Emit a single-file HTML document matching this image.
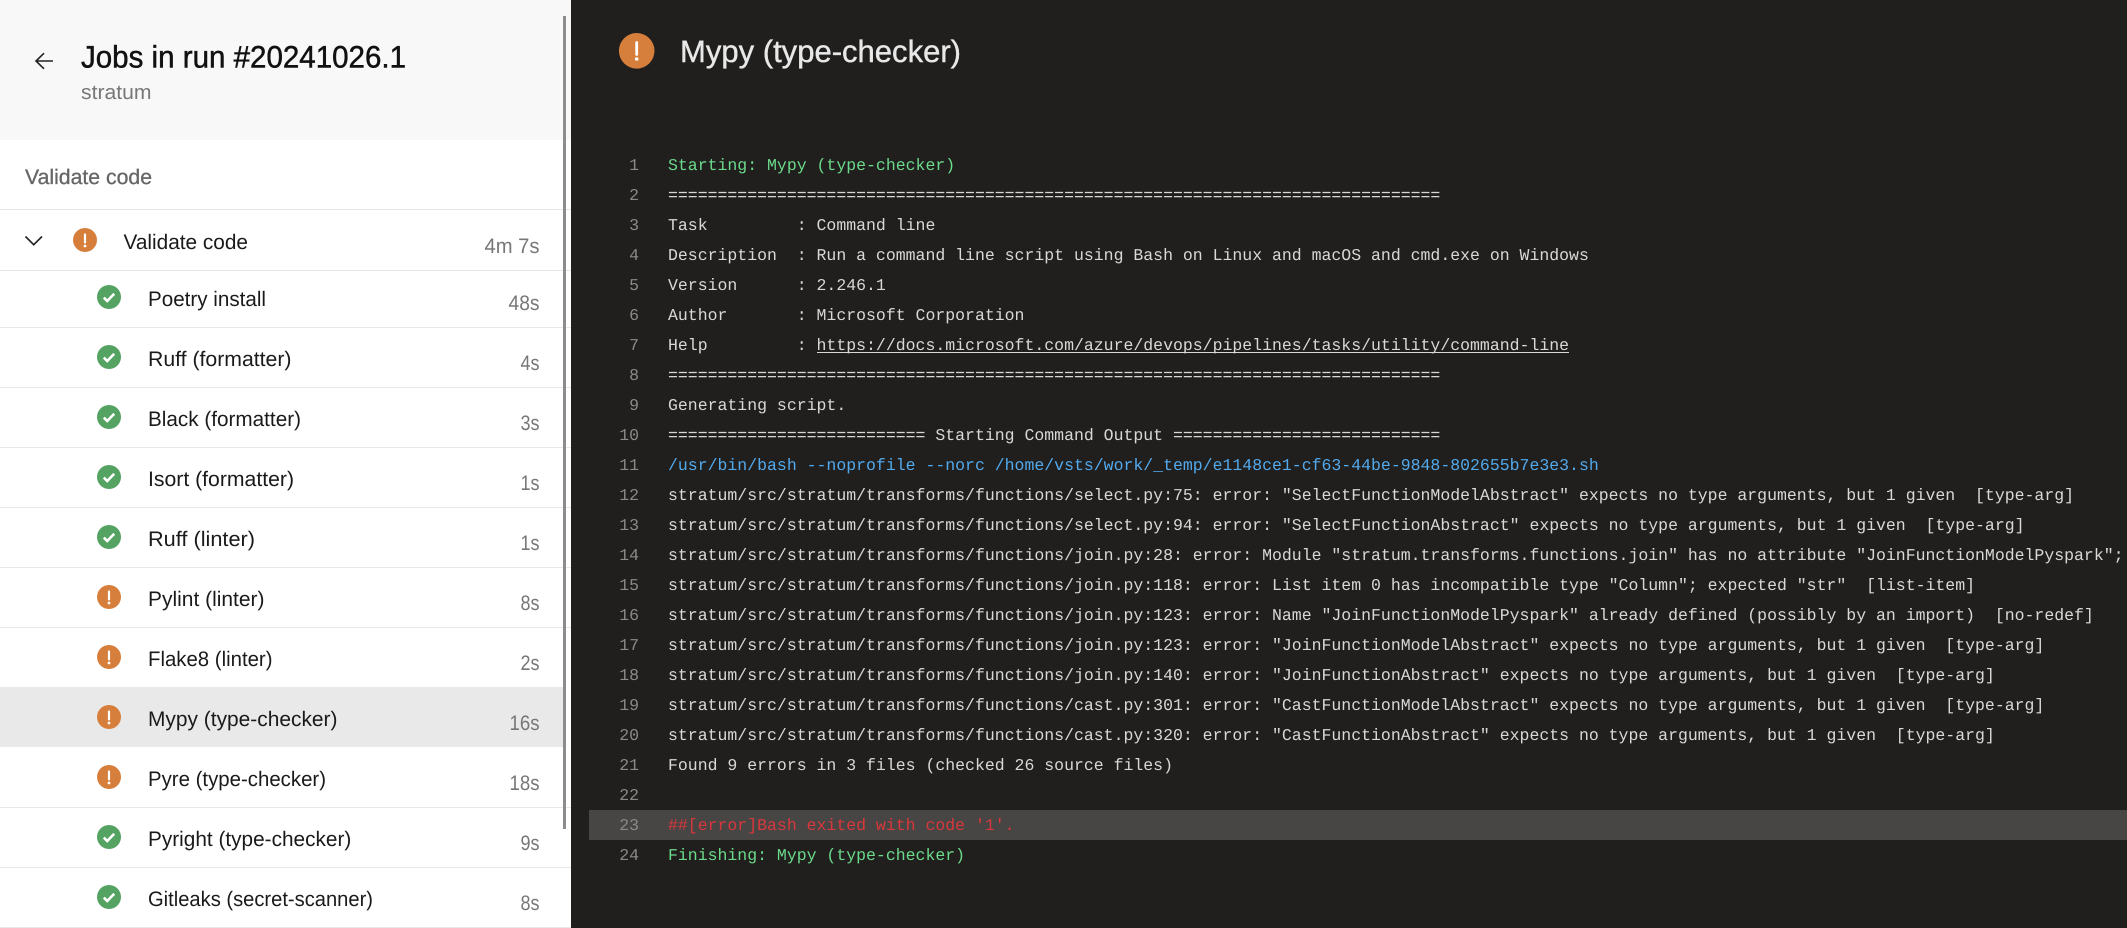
<!DOCTYPE html>
<html lang="en"><head><meta charset="utf-8"><title>Mypy (type-checker)</title>
<style>
html,body{margin:0;padding:0;width:2127px;height:928px;overflow:hidden;background:#201f1e}
svg{display:block}
text{font-family:"Liberation Sans",sans-serif;text-rendering:geometricPrecision;white-space:pre}
.job{font-size:21px;fill:#1a1a1a}
.dur{font-size:21px;fill:#777}
.n{font-family:"Liberation Mono",monospace;font-size:16.5px;fill:#8a8a89;text-anchor:end}
.l{font-family:"Liberation Mono",monospace;font-size:16.5px;fill:#d8d8d7}
.g{fill:#6bd98a}.b{fill:#52a9ec}.r{fill:#d8373c}
</style></head><body>
<svg width="2127" height="928" viewBox="0 0 2127 928" xmlns="http://www.w3.org/2000/svg">
<defs>
<g id="w"><circle r="12" fill="#d67f3c"/><path d="M0-5.500V2.400" stroke="#fff" stroke-width="2.200" stroke-linecap="round"/><circle cy="6" r="1.400" fill="#fff"/></g>
<g id="s"><circle r="12" fill="#55a362"/><path d="M-5.200.6-1.800 4 5.200-3.200" fill="none" stroke="#fff" stroke-width="2.600"/></g>
</defs>
<rect x="0" y="0" width="571" height="928" fill="#fff"/>
<rect x="0" y="0" width="571" height="140" fill="#f8f8f8"/>
<path d="M53 61H36M44 53.200 36 61l8 7.800" fill="none" stroke="#222" stroke-width="1.600"/>
<text x="81" y="67.500" font-size="31" fill="#111" stroke="#111" stroke-width=".5" textLength="325" lengthAdjust="spacingAndGlyphs">Jobs in run #20241026.1</text>
<text x="81" y="99" font-size="20.500" fill="#777" textLength="70.500" lengthAdjust="spacingAndGlyphs">stratum</text>
<text x="25" y="184" font-size="21" fill="#666" stroke="#666" stroke-width=".3" textLength="127" lengthAdjust="spacingAndGlyphs">Validate code</text>

<rect x="0" y="687" width="563" height="60" fill="#e9e9e9"/>
<g fill="#e8e8e8">
<rect y="209" width="571" height="1"/><rect y="270" width="571" height="1"/><rect y="327" width="571" height="1"/><rect y="387" width="571" height="1"/><rect y="447" width="571" height="1"/><rect y="507" width="571" height="1"/><rect y="567" width="571" height="1"/><rect y="627" width="571" height="1"/><rect y="807" width="571" height="1"/><rect y="867" width="571" height="1"/><rect y="927" width="571" height="1"/>
</g>

<path d="M25.500 236.500 33.700 244.700 42 236.500" fill="none" stroke="#222" stroke-width="1.600"/>
<use href="#w" x="85" y="240"/>
<text class="job" x="123.500" y="249" textLength="124.500" lengthAdjust="spacingAndGlyphs">Validate code</text>
<text class="dur" x="539.500" y="253" text-anchor="end" textLength="55" lengthAdjust="spacingAndGlyphs">4m 7s</text>

<use href="#s" x="109" y="297"/><text class="job" x="148" y="306" textLength="118" lengthAdjust="spacingAndGlyphs">Poetry install</text><text class="dur" x="539.500" y="310" text-anchor="end" textLength="31" lengthAdjust="spacingAndGlyphs">48s</text>
<use href="#s" x="109" y="357"/><text class="job" x="148" y="366" textLength="143.500" lengthAdjust="spacingAndGlyphs">Ruff (formatter)</text><text class="dur" x="539.500" y="370" text-anchor="end" textLength="19" lengthAdjust="spacingAndGlyphs">4s</text>
<use href="#s" x="109" y="417"/><text class="job" x="148" y="426" textLength="153" lengthAdjust="spacingAndGlyphs">Black (formatter)</text><text class="dur" x="539.500" y="430" text-anchor="end" textLength="19" lengthAdjust="spacingAndGlyphs">3s</text>
<use href="#s" x="109" y="477"/><text class="job" x="148" y="486" textLength="146" lengthAdjust="spacingAndGlyphs">Isort (formatter)</text><text class="dur" x="539.500" y="490" text-anchor="end" textLength="19" lengthAdjust="spacingAndGlyphs">1s</text>
<use href="#s" x="109" y="537"/><text class="job" x="148" y="546" textLength="107" lengthAdjust="spacingAndGlyphs">Ruff (linter)</text><text class="dur" x="539.500" y="550" text-anchor="end" textLength="19" lengthAdjust="spacingAndGlyphs">1s</text>
<use href="#w" x="109" y="597"/><text class="job" x="148" y="606" textLength="116.500" lengthAdjust="spacingAndGlyphs">Pylint (linter)</text><text class="dur" x="539.500" y="610" text-anchor="end" textLength="19" lengthAdjust="spacingAndGlyphs">8s</text>
<use href="#w" x="109" y="657"/><text class="job" x="148" y="666" textLength="124.500" lengthAdjust="spacingAndGlyphs">Flake8 (linter)</text><text class="dur" x="539.500" y="670" text-anchor="end" textLength="19" lengthAdjust="spacingAndGlyphs">2s</text>
<use href="#w" x="109" y="717"/><text class="job" x="148" y="726" textLength="189.500" lengthAdjust="spacingAndGlyphs">Mypy (type-checker)</text><text class="dur" x="539.500" y="730" text-anchor="end" textLength="30" lengthAdjust="spacingAndGlyphs">16s</text>
<use href="#w" x="109" y="777"/><text class="job" x="148" y="786" textLength="178" lengthAdjust="spacingAndGlyphs">Pyre (type-checker)</text><text class="dur" x="539.500" y="790" text-anchor="end" textLength="30" lengthAdjust="spacingAndGlyphs">18s</text>
<use href="#s" x="109" y="837"/><text class="job" x="148" y="846" textLength="203.300" lengthAdjust="spacingAndGlyphs">Pyright (type-checker)</text><text class="dur" x="539.500" y="850" text-anchor="end" textLength="19" lengthAdjust="spacingAndGlyphs">9s</text>
<use href="#s" x="109" y="897"/><text class="job" x="148" y="906" textLength="225" lengthAdjust="spacingAndGlyphs">Gitleaks (secret-scanner)</text><text class="dur" x="539.500" y="910" text-anchor="end" textLength="19" lengthAdjust="spacingAndGlyphs">8s</text>

<rect x="563" y="16" width="3" height="813" fill="#8c8c8c"/>

<rect x="571" y="0" width="1556" height="928" fill="#201f1e"/>
<circle cx="636.700" cy="50.800" r="17.800" fill="#d67f3c"/>
<path d="M636.700 42.500V54.500" stroke="#fff" stroke-width="2.800" stroke-linecap="round"/><circle cx="636.700" cy="59" r="1.800" fill="#fff"/>
<text x="680" y="62" font-size="31" fill="#e8e8e8" stroke="#e8e8e8" stroke-width=".4" textLength="281" lengthAdjust="spacingAndGlyphs">Mypy (type-checker)</text>

<rect x="589" y="810" width="1538" height="30" fill="#474645"/>
<rect x="817" y="352" width="752" height="1" fill="#d8d8d7"/>

<g transform="translate(0,-1)">
<text class="n" x="639" y="171">1</text><text class="l g" x="668" y="171">Starting: Mypy (type-checker)</text>
<text class="n" x="639" y="201">2</text><text class="l" x="668" y="201">==============================================================================</text>
<text class="n" x="639" y="231">3</text><text class="l" x="668" y="231">Task         : Command line</text>
<text class="n" x="639" y="261">4</text><text class="l" x="668" y="261">Description  : Run a command line script using Bash on Linux and macOS and cmd.exe on Windows</text>
<text class="n" x="639" y="291">5</text><text class="l" x="668" y="291">Version      : 2.246.1</text>
<text class="n" x="639" y="321">6</text><text class="l" x="668" y="321">Author       : Microsoft Corporation</text>
<text class="n" x="639" y="351">7</text><text class="l" x="668" y="351">Help         : https://docs.microsoft.com/azure/devops/pipelines/tasks/utility/command-line</text>
<text class="n" x="639" y="381">8</text><text class="l" x="668" y="381">==============================================================================</text>
<text class="n" x="639" y="411">9</text><text class="l" x="668" y="411">Generating script.</text>
<text class="n" x="639" y="441">10</text><text class="l" x="668" y="441">========================== Starting Command Output ===========================</text>
<text class="n" x="639" y="471">11</text><text class="l b" x="668" y="471">/usr/bin/bash --noprofile --norc /home/vsts/work/_temp/e1148ce1-cf63-44be-9848-802655b7e3e3.sh</text>
<text class="n" x="639" y="501">12</text><text class="l" x="668" y="501">stratum/src/stratum/transforms/functions/select.py:75: error: "SelectFunctionModelAbstract" expects no type arguments, but 1 given  [type-arg]</text>
<text class="n" x="639" y="531">13</text><text class="l" x="668" y="531">stratum/src/stratum/transforms/functions/select.py:94: error: "SelectFunctionAbstract" expects no type arguments, but 1 given  [type-arg]</text>
<text class="n" x="639" y="561">14</text><text class="l" x="668" y="561">stratum/src/stratum/transforms/functions/join.py:28: error: Module "stratum.transforms.functions.join" has no attribute "JoinFunctionModelPyspark";</text>
<text class="n" x="639" y="591">15</text><text class="l" x="668" y="591">stratum/src/stratum/transforms/functions/join.py:118: error: List item 0 has incompatible type "Column"; expected "str"  [list-item]</text>
<text class="n" x="639" y="621">16</text><text class="l" x="668" y="621">stratum/src/stratum/transforms/functions/join.py:123: error: Name "JoinFunctionModelPyspark" already defined (possibly by an import)  [no-redef]</text>
<text class="n" x="639" y="651">17</text><text class="l" x="668" y="651">stratum/src/stratum/transforms/functions/join.py:123: error: "JoinFunctionModelAbstract" expects no type arguments, but 1 given  [type-arg]</text>
<text class="n" x="639" y="681">18</text><text class="l" x="668" y="681">stratum/src/stratum/transforms/functions/join.py:140: error: "JoinFunctionAbstract" expects no type arguments, but 1 given  [type-arg]</text>
<text class="n" x="639" y="711">19</text><text class="l" x="668" y="711">stratum/src/stratum/transforms/functions/cast.py:301: error: "CastFunctionModelAbstract" expects no type arguments, but 1 given  [type-arg]</text>
<text class="n" x="639" y="741">20</text><text class="l" x="668" y="741">stratum/src/stratum/transforms/functions/cast.py:320: error: "CastFunctionAbstract" expects no type arguments, but 1 given  [type-arg]</text>
<text class="n" x="639" y="771">21</text><text class="l" x="668" y="771">Found 9 errors in 3 files (checked 26 source files)</text>
<text class="n" x="639" y="801">22</text>
<text class="n" x="639" y="831">23</text><text class="l r" x="668" y="831">##[error]Bash exited with code '1'.</text>
<text class="n" x="639" y="861">24</text><text class="l g" x="668" y="861">Finishing: Mypy (type-checker)</text>
</g>
</svg>
</body></html>
